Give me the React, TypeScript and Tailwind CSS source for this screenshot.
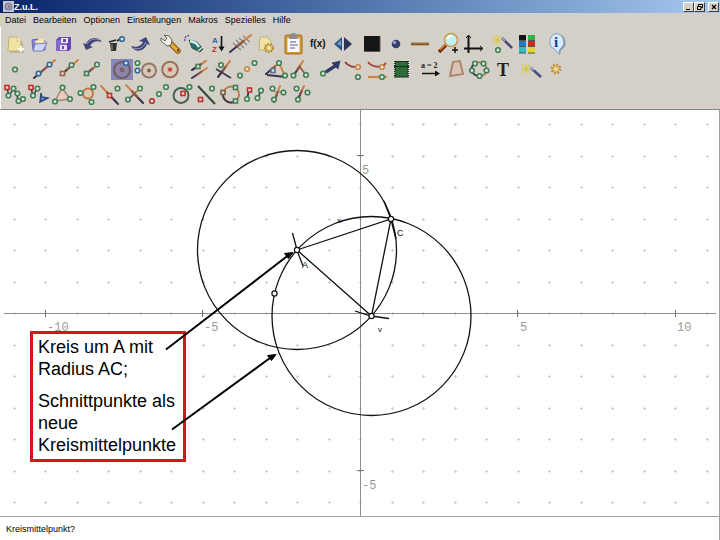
import type { ReactNode } from 'react'

const GREEN = '#3f7f55'
const BLUE = '#2f679c'
const RED = '#b8322c'
const ORANGE = '#cf8246'
const DARK = '#3c3450'
const NAVY = '#3d4577'

interface Tool {
  name: string
  icon: ReactNode
  active?: boolean
}

interface PointProps {
  x: number
  y: number
  c?: string
}

// round point used in most of the construction icons
function Dot({ x, y, c = GREEN }: PointProps) {
  return <circle cx={x} cy={y} r="2.3" fill="#dce6dc" stroke={c} strokeWidth="1.6" />
}

function Box({ x, y, c = GREEN }: PointProps) {
  return <rect x={x - 2} y={y - 2} width="4" height="4" fill="#e6dcd4" stroke={c} strokeWidth="1.6" />
}

// stroke that goes from dark to orange
function Stroke({ p, w = 2.1 }: { p: [number, number, number, number]; w?: number }) {
  const [x1, y1, x2, y2] = p
  const mx = (x1 + x2) / 2
  const my = (y1 + y2) / 2
  return (
    <g strokeWidth={w} strokeLinecap="round">
      <line x1={x1} y1={y1} x2={mx} y2={my} stroke={DARK} />
      <line x1={mx} y1={my} x2={x2} y2={y2} stroke={ORANGE} />
      <line x1={x1 + (x2 - x1) * 0.35} y1={y1 + (y2 - y1) * 0.35} x2={x1 + (x2 - x1) * 0.65} y2={y1 + (y2 - y1) * 0.65} stroke="#8a5848" />
    </g>
  )
}

function Sparkles({ x, y }: { x: number; y: number }) {
  return (
    <g stroke="#d6c94e" strokeWidth="1.6" strokeDasharray="2 1">
      <path d={`M${x - 5} ${y}h10M${x} ${y - 5}v10M${x - 4} ${y - 4}l8 8M${x + 4} ${y - 4}l-8 8`} />
    </g>
  )
}

const row1: Tool[][] = [
  [
    {
      name: 'Neu',
      icon: (
        <>
          <path d="M6 20h14M18 10v10" stroke="#b5ada0" strokeWidth="1.500" />
          <path d="M5 5h8l4 4v10H4z" fill="#f1e3a4" stroke="#b9a566" strokeWidth=".8" />
          <path d="M13 5v4h4" fill="#fff8d8" stroke="#b9a566" strokeWidth=".6" />
          <path d="M17 14v6M14 17h6" stroke="#fffbe6" strokeWidth="2" />
        </>
      ),
    },
    {
      name: 'Öffnen',
      icon: (
        <>
          <path d="M4 8l5-1 2 2h6v9H5z" fill="#8d8bd0" stroke="#5552a0" strokeWidth=".8" />
          <path d="M7 9l8-3 2 5-8 3z" fill="#f6e9b0" />
          <path d="M7 12l12-1-4 8H5z" fill="#cfd4fa" stroke="#6664b4" strokeWidth=".8" />
        </>
      ),
    },
    {
      name: 'Speichern',
      icon: (
        <>
          <path d="M4 8l3-3h12v12l-2 2H4z" fill="#6b47b4" />
          <path d="M4 8v11h11V8z" fill="#8568cc" />
          <path d="M9 6h7v5H9z" fill="#f2eefc" />
          <path d="M8 13h7v5H8z" fill="#e6dcf8" />
          <path d="M11 7h3v3h-3zM10 14h2v3h-2z" fill="#6b47b4" />
        </>
      ),
    },
  ],
  [
    {
      name: 'Rückgängig',
      icon: (
        <>
          <path d="M2 11l3 7 7-3-3-1c2-4 6-6 12-4-4-6-13-5-16 2z" fill={NAVY} />
          <path d="M6 12c3-5 8-6 12-4" fill="none" stroke="#9ba1cc" />
        </>
      ),
    },
    {
      name: 'Löschen',
      icon: (
        <>
          <path d="M5 11h7l-1 8H6z" fill="#30302e" />
          <path d="M4 10l7-2M12 9l3-2" stroke="#222" strokeWidth="1.600" />
          <path d="M7 12v6" stroke="#8c8c88" />
          <Dot x={17} y={7} c={BLUE} />
        </>
      ),
    },
    {
      name: 'Wiederholen',
      icon: (
        <>
          <path d="M2 14c6 2 10 0 12-4l-4-1 7-4 4 8-3-1c-3 8-12 9-16 2z" fill={NAVY} />
          <path d="M5 16c5 2 9 0 12-6" fill="none" stroke="#9ba1cc" />
        </>
      ),
    },
  ],
  [
    {
      name: 'Werkzeuge',
      icon: (
        <>
          <path d="M12 11l8 8" stroke="#80561a" strokeWidth="5.600" strokeLinecap="round" />
          <path d="M12 11l8 8" stroke="#e6ac32" strokeWidth="3.600" strokeLinecap="round" />
          <path d="M6 3l5 1 3 4-1 5-4 1-6-5V6l4 3 2-3z" fill="#f4f4ee" stroke="#555" strokeWidth=".9" />
          <path d="M20 17v3" stroke="#5c3e10" strokeWidth="1.600" />
        </>
      ),
    },
    {
      name: 'Zeichenstift',
      icon: (
        <>
          <path d="M3 9c-1-4 2-6 5-5" fill="none" stroke="#4d55a8" strokeWidth="1.400" strokeDasharray="2 1" />
          <path d="M7 8l8 2 6 7-3 3-8-4z" fill="#2b6b66" stroke="#1c3534" strokeWidth=".8" />
          <path d="M8 9l6 2 3 4" fill="none" stroke="#c9f2ec" strokeWidth="2.400" />
          <path d="M16 19l5-4" stroke="#e5e5dd" strokeWidth="1.400" />
        </>
      ),
    },
    {
      name: 'Sortieren',
      icon: (
        <>
          <text x="6" y="11" fontSize="8" fontWeight="bold" fill="#2463a8">A</text>
          <text x="6" y="20" fontSize="8" fontWeight="bold" fill="#cc2626">Z</text>
          <path d="M15.500 4v12" stroke="#111" strokeWidth="1.600" />
          <path d="M12.500 14.500h6l-3 5z" fill="#111" />
        </>
      ),
    },
    {
      name: 'Ausblenden',
      icon: (
        <>
          <path d="M3 11l8 7M6 8l8 8M9 6l8 7M13 4l7 6" stroke="#8a8782" strokeWidth="1.300" />
          <Stroke p={[0, 20, 21, 3]} />
        </>
      ),
    },
    {
      name: 'Makro laden',
      icon: (
        <>
          <path d="M6 5h7l4 4v9H5z" fill="#f1e3a4" stroke="#b9a566" strokeWidth=".8" />
          <circle cx="15" cy="16" r="4" fill="#e0c064" stroke="#a98331" strokeWidth="2" strokeDasharray="1.600 1.200" />
          <circle cx="15" cy="16" r="1.500" fill="#f8efc8" />
        </>
      ),
    },
  ],
  [
    {
      name: 'Kommentar',
      icon: (
        <>
          <rect x="2" y="3" width="17" height="19" rx="1.500" fill="#d99a2c" stroke="#8a5c14" strokeWidth=".8" />
          <path d="M4.500 6h12v14h-12z" fill="#fbfbff" />
          <path d="M7 4c0-4 7-4 7 0l1 3H6z" fill="#8b8d92" />
          <path d="M7 10h6M7 13h8M7 16h5" stroke="#4f5f86" />
        </>
      ),
    },
    {
      name: 'Funktion',
      icon: (
        <text x="3" y="15" fontSize="10" fontWeight="bold" fill="#111">f(x)</text>
      ),
    },
    {
      name: 'Blättern',
      icon: (
        <>
          <path d="M11 5v14l-8-7z" fill="#2d5688" />
          <path d="M13 5v14l8-7z" fill="#2b3554" />
          <path d="M10 8v6l-4-2z" fill="#6fa2cc" />
        </>
      ),
    },
  ],
  [
    {
      name: 'Farbe',
      icon: (
        <>
          <rect x="4" y="4" width="16" height="16" fill="#151515" />
          <path d="M4 19.500h16V4" fill="none" stroke="#555" />
        </>
      ),
    },
    {
      name: 'Punktform',
      icon: (
        <>
          <circle cx="12" cy="12" r="4.300" fill="#343e6c" />
          <circle cx="10.500" cy="10.500" r="1.800" fill="#8f9ac6" />
        </>
      ),
    },
    {
      name: 'Linienstärke',
      icon: (
        <>
          <path d="M3 12h18" stroke="#7d5424" strokeWidth="2.600" />
          <path d="M3 11.200h18" stroke="#b98b4c" strokeWidth=".8" />
        </>
      ),
    },
  ],
  [
    {
      name: 'Zoom',
      icon: (
        <>
          <path d="M2 20l7-7" stroke="#6a2c16" strokeWidth="3.400" />
          <path d="M3 18l6-6" stroke="#d97a2e" strokeWidth="1.600" />
          <circle cx="14" cy="8" r="6.500" fill="#bff0f4" stroke="#cf9a50" strokeWidth="1.600" />
          <path d="M10 7c1-2 3-3 5-3" fill="none" stroke="#fff" strokeWidth="1.800" />
          <path d="M18 15v6M15 18h6" stroke="#111" strokeWidth="1.500" />
        </>
      ),
    },
    {
      name: 'Achsen',
      icon: (
        <>
          <path d="M7.500 4v17M3 16.500h18" stroke="#111" strokeWidth="2" />
          <path d="M5 6l2.500-3L10 6M19 14l3 2.500-3 2.500" fill="none" stroke="#111" />
        </>
      ),
    },
  ],
  [
    {
      name: 'Objekte zeigen',
      icon: (
        <>
          <Sparkles x={7} y={8} />
          <path d="M12 6l10 10" stroke="#434a78" strokeWidth="2.600" />
          <path d="M12 6l3 3" stroke="#a9aed0" strokeWidth="1.600" />
          <Dot x={8} y={18} />
        </>
      ),
    },
    {
      name: 'Farbauswahl',
      icon: (
        <>
          <path d="M5 3h7v5H5z" fill="#141414" />
          <path d="M14 3h7v5h-7z" fill="#2fb344" />
          <path d="M5 9h7v5H5z" fill="#2479c4" />
          <path d="M14 9h7v5h-7z" fill="#d6261f" />
          <path d="M5 15h7v6H5z" fill="#35bcc0" />
          <path d="M14 15h7v6h-7z" fill="#e6d43c" />
          <path d="M5 8.500h7M14 8.500h7M5 14.500h7M14 14.500h7M5 21h7M14 21h7" stroke="#333" strokeWidth=".8" />
        </>
      ),
    },
  ],
  [
    {
      name: 'Info',
      icon: (
        <>
          <path d="M14 2a8.500 8.500 0 0 1 4 16l-1 5-4-5A8.500 8.500 0 0 1 14 2z" fill="#8d96a4" />
          <path d="M13 1.500a8.500 8.500 0 0 1 4 15.500l-1 5-4-4.500A8.500 8.500 0 0 1 13 1.500z" fill="#d8eafb" stroke="#7ba0c8" />
          <text x="13" y="15" textAnchor="middle" fontFamily="Liberation Serif, serif" fontSize="15" fontWeight="bold" fill="#173f86">i</text>
        </>
      ),
    },
  ],
]

const row2: Tool[][] = [
  [{ name: 'Punkt', icon: <Dot x={11} y={12.5} /> }],
  [
    {
      name: 'Gerade',
      icon: (
        <>
          <Stroke p={[1, 21, 22, 3]} />
          <Dot x={5.5} y={16.5} c={BLUE} />
          <Dot x={16.5} y={7.5} c={BLUE} />
        </>
      ),
    },
    {
      name: 'Strahl',
      icon: (
        <>
          <Stroke p={[5, 17, 21, 3]} />
          <Box x={5.5} y={16.5} c="#94623c" />
          <Dot x={14.5} y={8} />
        </>
      ),
    },
    {
      name: 'Strecke',
      icon: (
        <>
          <Stroke p={[5, 17, 16, 8]} />
          <Box x={5.5} y={16.5} />
          <Dot x={16} y={7.5} />
        </>
      ),
    },
  ],
  [
    {
      name: 'Kreis',
      active: true,
      icon: (
        <>
          <circle cx="12" cy="13" r="8" fill="#8b86aa" stroke="#705a68" strokeWidth="2.200" />
          <circle cx="12" cy="13" r="1.800" fill="#a06a52" stroke="#6b5868" />
          <Dot x={16} y={6} c={BLUE} />
        </>
      ),
    },
    {
      name: 'Kreis mit Radius',
      icon: (
        <>
          <circle cx="15" cy="13.500" r="7" fill="#d8c8b8" stroke="#907868" strokeWidth="2" />
          <circle cx="15" cy="13.500" r="1.500" fill="#a8604c" stroke="#705040" />
          <Dot x={3.5} y={6} />
          <Dot x={3.5} y={13.5} c={BLUE} />
        </>
      ),
    },
    {
      name: 'Fester Kreis',
      icon: (
        <>
          <circle cx="12" cy="12.500" r="7.800" fill="#d8c8b8" stroke="#94705c" strokeWidth="2" />
          <path d="M10 10.500h4v4h-4z" fill="#c0392b" stroke="#d89888" />
        </>
      ),
    },
  ],
  [
    {
      name: 'Parallele',
      icon: (
        <>
          <Stroke p={[5, 13, 19, 4]} />
          <Stroke p={[5, 21, 20, 11]} />
          <Box x={11} y={9.5} />
        </>
      ),
    },
    {
      name: 'Lot',
      icon: (
        <>
          <Stroke p={[7, 20, 19, 4]} />
          <path d="M5 12l15 9" stroke={DARK} strokeWidth="1.800" />
          <Dot x={10} y={8} />
        </>
      ),
    },
    {
      name: 'Mittelpunkt',
      icon: (
        <>
          <Dot x={5} y={18.5} />
          <Dot x={12} y={12} c={ORANGE} />
          <Dot x={19.5} y={6} />
        </>
      ),
    },
  ],
  [
    {
      name: 'Winkel',
      icon: (
        <>
          <Stroke p={[2, 17, 16, 5]} />
          <path d="M3 18l19 2" stroke={DARK} strokeWidth="1.800" />
          <path d="M15 6l6 13" stroke={ORANGE} strokeWidth="1.800" />
          <Box x={9} y={13.5} c="#556f94" />
          <Dot x={15} y={6} />
          <Dot x={21} y={18.5} />
        </>
      ),
    },
    {
      name: 'Fester Winkel',
      icon: (
        <>
          <Stroke p={[6, 18, 15, 4]} />
          <path d="M11 9l7 9" stroke="#9a5c40" strokeWidth="1.900" />
          <Dot x={5.5} y={18.5} />
          <Dot x={18} y={18} />
        </>
      ),
    },
  ],
  [
    {
      name: 'Vektor',
      icon: (
        <>
          <path d="M8 14l9-6-2-2 8-2-2 8-2-2-9 6z" fill="#303a70" stroke="#1f2650" strokeWidth=".6" />
          <Dot x={6} y={16.5} />
        </>
      ),
    },
    {
      name: 'Spur',
      icon: (
        <>
          <path d="M4 5c4 5 8 5 13 5" fill="none" stroke="#8e3f34" strokeWidth="2" />
          <Dot x={17} y={10} c={ORANGE} />
          <Dot x={17} y={20} />
        </>
      ),
    },
    {
      name: 'Automatische Spur',
      icon: (
        <>
          <path d="M3 5c4 5 13 7 18 1" fill="none" stroke="#a2493a" strokeWidth="2" />
          <path d="M3 20h19" stroke={ORANGE} strokeWidth="2.200" />
          <Dot x={17} y={10} c={ORANGE} />
          <Dot x={17} y={20} />
        </>
      ),
    },
    {
      name: 'Animation',
      icon: (
        <>
          <rect x="6" y="4" width="13" height="16" fill="#2f6a3b" />
          <path d="M6 4v16M19 4v16" stroke="#173a1e" strokeWidth="2" strokeDasharray="1 1" />
          <path d="M5 4.500h15M5 9.500h15M5 20h15" stroke="#12301a" />
        </>
      ),
    },
  ],
  [
    {
      name: 'Term',
      icon: (
        <>
          <text x="3" y="11" fontFamily="Liberation Serif, serif" fontSize="8" fontWeight="bold" fill="#222">a = 2</text>
          <path d="M4 16.500h15" stroke="#111" strokeWidth="1.500" />
          <path d="M17 13.500l5 3-5 3z" fill="#111" />
        </>
      ),
    },
    {
      name: 'Fläche',
      icon: (
        <path d="M11 5l7-1 3 13-13 2z" fill="#dcc4b4" stroke="#a98772" strokeWidth="2" />
      ),
    },
    {
      name: 'Kegelschnitt',
      icon: (
        <>
          <path d="M9 6.500c-3 2-4 5-3 7.500 1 3 4 5 7.500 5" fill="none" stroke={DARK} strokeWidth="1.800" />
          <path d="M9 6.500c3-2 6-1 8.500 0 3 3 4 5 3 7.500-1 3-4 5-7 5" fill="none" stroke="#b07650" strokeWidth="1.800" />
          <Dot x={9} y={6.5} />
          <Dot x={17.5} y={6.5} />
          <Dot x={20.5} y={13.5} />
          <Dot x={13.5} y={19} />
          <Dot x={6} y={13.5} />
        </>
      ),
    },
    {
      name: 'Text',
      icon: (
        <text x="13" y="19" textAnchor="middle" fontFamily="Liberation Serif, serif" fontSize="18" fontWeight="bold" fill="#222">T</text>
      ),
    },
  ],
  [
    {
      name: 'Verstecken',
      icon: (
        <>
          <Sparkles x={7} y={12} />
          <path d="M12 11l10 9" stroke="#4a5080" strokeWidth="2.600" />
          <path d="M11 10l4 3" stroke="#a9aed0" strokeWidth="1.600" />
        </>
      ),
    },
    {
      name: 'Makro ausführen',
      icon: (
        <>
          <circle cx="13" cy="12" r="4" fill="#e2c470" stroke="#b8924a" strokeWidth="2.800" strokeDasharray="1.800 1.300" />
          <circle cx="13" cy="12" r="1.500" fill="#f4e6b4" />
        </>
      ),
    },
  ],
]

const row3: Tool[][] = [
  [
    {
      name: 'Bewegen',
      icon: (
        <>
          <path d="M5 6l2 8 4-7 4 5 1 7 5-2" fill="none" stroke={DARK} strokeWidth="1.500" />
          <Box x={5} y={5.5} c={RED} />
          <Dot x={11.5} y={6.5} />
          <Dot x={6.5} y={13.5} />
          <Dot x={15.5} y={11.5} />
          <Dot x={21} y={17} />
          <Dot x={16.5} y={19} />
        </>
      ),
    },
    {
      name: 'Winkel abtragen',
      icon: (
        <>
          <path d="M5 6l2 8 4-7" fill="none" stroke={DARK} strokeWidth="1.500" />
          <path d="M15 11l-1 9 8-4-6-1z" fill="#5d83b4" stroke="#2d4680" strokeWidth="1.400" />
          <Box x={5} y={5.5} c={RED} />
          <Dot x={11.5} y={6.5} />
          <Dot x={7} y={13.5} />
        </>
      ),
    },
    {
      name: 'Dreieck',
      icon: (
        <>
          <path d="M12 6l8 11-15 2z" fill="#e8ccc0" stroke="#9a8478" strokeWidth="1.400" />
          <Dot x={12.5} y={5.5} />
          <Dot x={5} y={19.5} />
          <Dot x={20} y={17} />
        </>
      ),
    },
    {
      name: 'Kreis durch drei Punkte',
      icon: (
        <>
          <path d="M6 11h4M19 5l-2 3M17 20l-2-4" stroke="#8a5848" strokeWidth="1.400" />
          <circle cx="14" cy="11.500" r="5" fill="#dcc8b4" stroke="#bf7844" strokeWidth="2" />
          <Dot x={6.5} y={11} />
          <Dot x={19.5} y={5} />
          <Dot x={17.5} y={20} />
        </>
      ),
    },
    {
      name: 'Spiegeln',
      icon: (
        <>
          <Stroke p={[20, 22, 3, 4]} />
          <Box x={11.5} y={13.5} c={RED} />
          <Dot x={19.5} y={6.5} />
        </>
      ),
    },
    {
      name: 'Mittelsenkrechte',
      icon: (
        <>
          <Stroke p={[21, 21, 4, 3]} />
          <Stroke p={[6, 18, 18, 6]} w={1.5} />
          <Dot x={6} y={17.5} />
          <Dot x={18} y={6.5} />
        </>
      ),
    },
    {
      name: 'Punktspiegelung',
      icon: (
        <>
          <Dot x={6} y={19} c={RED} />
          <Dot x={13} y={12} />
          <Dot x={20} y={5} />
        </>
      ),
    },
    {
      name: 'Inversion',
      icon: (
        <>
          <circle cx="11" cy="13.500" r="7.500" fill="none" stroke="#47614c" strokeWidth="2" />
          <Box x={13} y={11.5} c={RED} />
          <Dot x={19.5} y={5} />
        </>
      ),
    },
    {
      name: 'Achsenspiegelung',
      icon: (
        <>
          <path d="M4 4l17 18" stroke="#304838" strokeWidth="2" />
          <Box x={6.5} y={17.5} c={RED} />
          <Dot x={18} y={6.5} />
        </>
      ),
    },
    {
      name: 'Umkreis',
      icon: (
        <>
          <circle cx="13" cy="12.500" r="8" fill="none" stroke="#bf7844" strokeWidth="1.900" />
          <path d="M5 12.500a8 8 0 0 0 12 7" fill="none" stroke={DARK} strokeWidth="1.900" />
          <Box x={17.5} y={5.5} />
          <Box x={5} y={10.5} c="#716340" />
          <Box x={17.5} y={19} />
        </>
      ),
    },
    {
      name: 'Verschieben',
      icon: (
        <>
          <path d="M7 8l-2 9M19 8l-3 8" stroke={DARK} strokeWidth="1.800" />
          <Box x={7.5} y={8} c={RED} />
          <Dot x={5} y={17} />
          <Dot x={19} y={8.5} />
          <Dot x={15.5} y={16} />
        </>
      ),
    },
    {
      name: 'Winkelhalbierende',
      icon: (
        <>
          <Stroke p={[8, 20, 14, 4]} />
          <path d="M8 10h9" stroke="#b07650" />
          <Dot x={6.5} y={6.5} />
          <Dot x={17.5} y={10.5} />
          <Dot x={8} y={17.5} />
        </>
      ),
    },
    {
      name: 'Drehen',
      icon: (
        <>
          <Stroke p={[8, 17, 14, 4]} />
          <Dot x={6.5} y={6.5} />
          <Dot x={17.5} y={10.5} />
          <Dot x={8} y={17.5} />
        </>
      ),
    },
  ],
]

const menus = ['Datei', 'Bearbeiten', 'Optionen', 'Einstellungen', 'Makros', 'Spezielles', 'Hilfe']

function ToolRow({ groups, pad = 'pl-[3px]' }: { groups: Tool[][]; pad?: string }) {
  return (
    <div className={`flex gap-[5px] ${pad}`}>
      {groups.map((group, i) => (
        <div key={i} className="flex">
          {group.map((tool) => (
            <button key={tool.name} type="button" aria-label={tool.name} className="flex h-[25px] w-6 shrink-0 items-center justify-center">
              <svg viewBox="0 0 24 24" fill="none" className="h-6 w-6 overflow-visible">
                {tool.active && <rect x="1" y="2" width="22" height="21" fill="#8788b6" />}
                {tool.icon}
              </svg>
            </button>
          ))}
        </div>
      ))}
    </div>
  )
}

function TitleBar() {
  const btn = 'flex h-[10px] w-[11px] items-center justify-center border border-t-white border-l-white border-r-[#404040] border-b-[#404040] bg-[#d4d0c8]'
  return (
    <header className="flex h-[13px] items-center bg-linear-to-r from-[#0a246a] to-[#a6caf0] pr-px pl-[3px]">
      <svg viewBox="0 0 10 10" className="h-[11px] w-[11px]">
        <rect width="10" height="10" fill="#c4c4d4" />
        <circle cx="5" cy="5" r="3" fill="#a8a4bc" stroke="#77728e" />
        <circle cx="5.500" cy="5" r="1" fill="#8a5c58" />
      </svg>
      <h1 className="text-[9px] leading-3 font-bold text-white">Z.u.L.</h1>
      <div className="ml-auto flex">
        <button type="button" aria-label="Minimieren" className={btn}>
          <svg viewBox="0 0 8 8" className="h-2 w-2 shrink-0"><path d="M1 6.500h4" stroke="#000" /></svg>
        </button>
        <button type="button" aria-label="Wiederherstellen" className={btn}>
          <svg viewBox="0 0 8 8" className="h-2 w-2 shrink-0"><path d="M2.500 3.500v-2h4v3H5M1.500 3.500h3.500v3H1.500z" fill="none" stroke="#000" /></svg>
        </button>
        <button type="button" aria-label="Schließen" className={`ml-[3px] ${btn}`}>
          <svg viewBox="0 0 8 8" className="h-2 w-2 shrink-0"><path d="M2 2l4 4M6 2l-4 4" stroke="#000" strokeWidth="1.200" /></svg>
        </button>
      </div>
    </header>
  )
}

const STEP = 31.5
const OX = 360.5
const OY = 203.5

const cols = Array.from({ length: 23 }, (_, i) => i - 11)
const rows = Array.from({ length: 13 }, (_, i) => i - 6)

const axisLabels = [
  { x: 47, y: 221, text: '-10' },
  { x: 204, y: 221, text: '-5' },
  { x: 520, y: 221, text: '5' },
  { x: 677, y: 221, text: '10' },
  { x: 362, y: 64, text: '5' },
  { x: 362, y: 379, text: '-5' },
]

const points = [
  { x: 297, y: 140 },
  { x: 391, y: 109 },
  { x: 371.5, y: 206 },
  { x: 274.5, y: 183.5 },
]

function Plane() {
  return (
    <svg viewBox="0 0 719 406" className="block w-full" fill="none">
      <g stroke="#cfcfcf">
        {cols.map((c) =>
          rows.map((r) => {
            const x = Math.floor(OX + c * STEP) + 0.5
            const y = Math.floor(OY + r * STEP) + 0.5
            return <path key={`${c}/${r}`} d={`M${x - 1.5} ${y}h3M${x} ${y - 1.5}v3`} />
          }),
        )}
      </g>

      {/* Achsen */}
      <path d="M4 203.500h712M360.500 0v406" stroke="#8c8c8c" />
      <path d="M45.500 200v7M202.500 200v7M517.500 200v7M675.500 200v7M357 45.500h7M357 360.500h7" stroke="#777" />
      <g fontFamily="Liberation Mono, monospace" fontSize="12" fill="#9a9a9a">
        {axisLabels.map((l) => (
          <text key={`${l.x}-${l.y}`} x={l.x} y={l.y}>{l.text}</text>
        ))}
      </g>

      {/* Kreise und Dreieck */}
      <g stroke="#111" strokeWidth="1.300">
        <circle cx="297" cy="140" r="99.500" />
        <circle cx="371.500" cy="206" r="99.500" />
        <path d="M297 140L391 109L371.500 206Z" />
        <path d="M292.500 123l4 15M298 143l5 13M355 201l16 5 18 2.500" />
        <path d="M384 91l7 18 5 20" strokeWidth="1.500" />
      </g>
      {points.map((p) => (
        <circle key={p.x} cx={p.x} cy={p.y} r="2.600" fill="#fff" stroke="#111" strokeWidth="1.200" />
      ))}
      <g fontSize="9" fill="#111">
        <text x="302" y="158">A</text>
        <text x="397" y="126">C</text>
        <text x="337" y="113" fontSize="8">x</text>
        <text x="378" y="222" fontSize="8">v</text>
      </g>
    </svg>
  )
}

function Arrows() {
  return (
    <svg viewBox="0 0 719 406" className="pointer-events-none absolute inset-0 w-full" fill="none">
      <g stroke="#000" strokeWidth="2">
        <path d="M166 239.500L288 145.500" />
        <path d="M172 319.500L270 248" />
      </g>
      <path d="M293 142.500l-4.500 6-4-5zM276 244.500l-4.500 6-4-5z" fill="#000" stroke="#000" />
    </svg>
  )
}

function App() {
  return (
    <div className="flex min-h-screen flex-col bg-white font-['Liberation_Sans',Arial,sans-serif] text-black">
      <TitleBar />

      <div className="border-b border-[#858585] bg-[#d4d0c8]">
        <nav className="flex h-[14px] items-center gap-[7px] pl-[5px]">
          {menus.map((m) => (
            <button key={m} type="button" className="text-[9px] leading-3">{m}</button>
          ))}
        </nav>
        <div className="border-l border-white pt-1 pb-[3px]">
          <ToolRow groups={row1} />
          <ToolRow groups={row2} />
          <ToolRow groups={row3} pad="pl-px" />
        </div>
      </div>

      <main className="relative border-r border-[#a0a0a0]">
        <Plane />
        <div className="absolute top-[221px] left-[30px] w-[156px] border-3 border-[#d0161b] bg-white px-[5px] pt-[2px] pb-[3px] text-[18px] leading-[22px]">
          <p>Kreis um A mit Radius AC;</p>
          <p className="mt-[10px]">Schnittpunkte als neue Kreismittelpunkte</p>
        </div>
        <Arrows />
      </main>

      <footer className="flex grow items-center border-t border-r border-[#a0a0a0] pl-[6px] text-[9px] leading-3">
        Kreismittelpunkt?
      </footer>
    </div>
  )
}

export default App
